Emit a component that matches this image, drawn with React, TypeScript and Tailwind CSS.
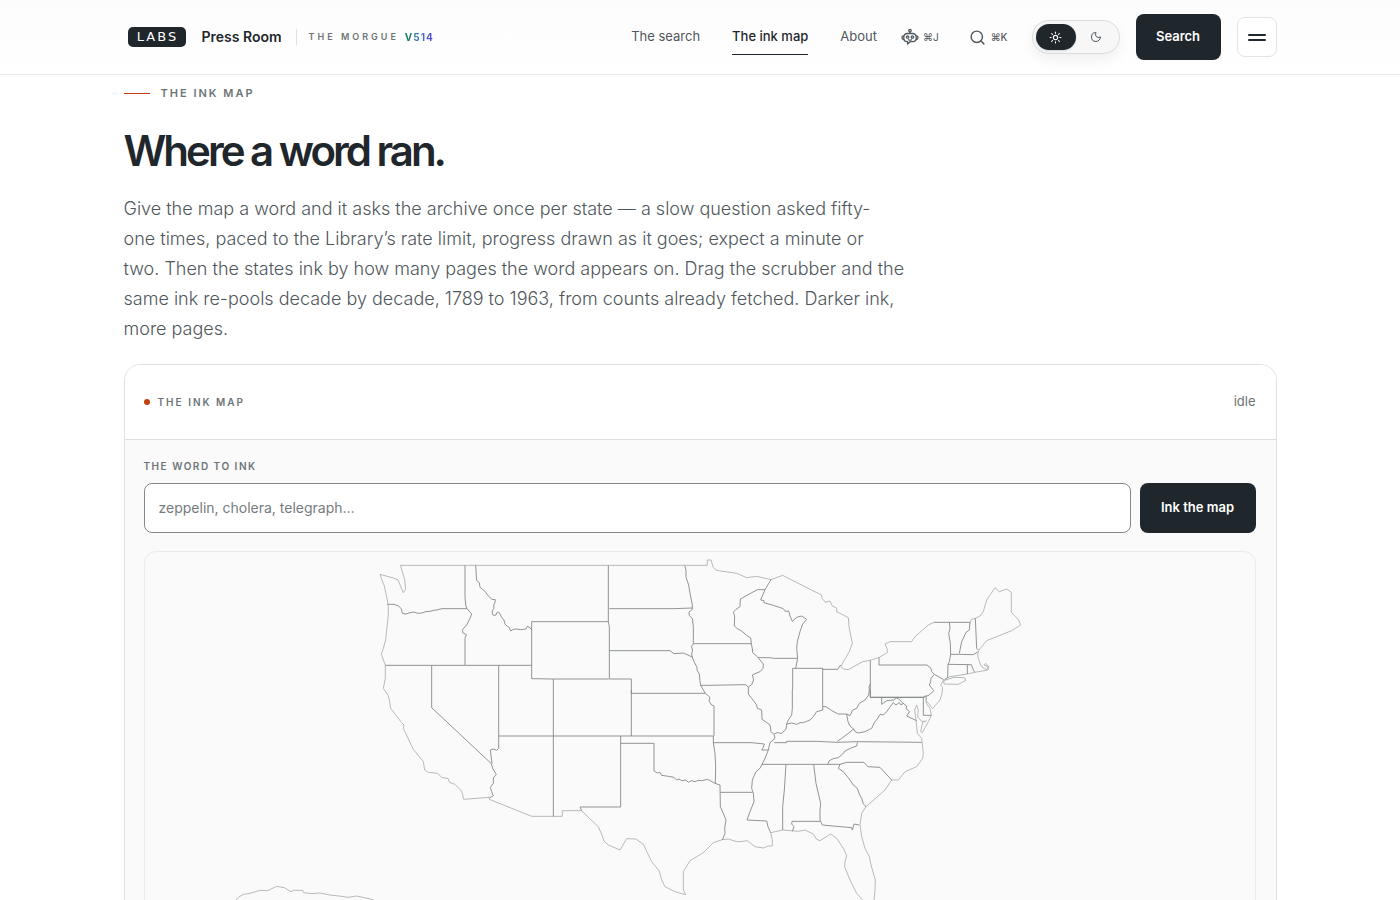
import { useState } from "react";
import { Moon, Search, Sun } from "lucide-react";
import clsx from "clsx";

type Region = { id: string; shift: string; coast: string; borders: string };

// Outlines are kept per region, each in its own local coordinates
const regions: Region[] = [
  {
    id: "northwest",
    shift: "translate(675 -6)",
    coast:
      "M716 46H91L97 65 104 90 107 118 100 128 84 90 70 84 30 73 34 85 43 108 50 140 55 170 55 195 50 240 47 270 40 295 34 313 42 335 46 346 46 385 40 415 55 437 58 450",
    borders:
      "M285 46V140L287 165 291 176 305 192 300 205 290 225 278 238 278 248 289 254 285 265V345 M52 163 72 163 85 168 94 176 97 190 108 192 120 188 132 186 143 190 155 189 168 185 180 184 190 181 200 180 216 176 291 176 M317 46 320 92 328 98 330 112 345 124 355 138 366 148 376 149 375 158 371 165 372 175 367 182 367 192 370 196 378 195 381 187 386 186 390 192 395 202 402 210 405 222 412 229 418 232 422 243 430 238 440 237 452 239 468 237 472 229 480 233 485 240 M46 346H485 M716 215H485V386L550 387H716 M185 346V420 M386 346V420 M550 387V420",
  },
  {
    id: "great-lakes",
    shift: "translate(1365 -6)",
    coast:
      "M26 46H322V30H333L340 53 350 61 410 70 440 83 470 79 513 89 548 76 575 90 664 135 667 146 676 157 690 153 697 168 710 174 710 185 745 203",
    borders:
      "M25 46V214L28 230V387 M254 46 258 60 258 82 266 105 270 130 277 165 277 178 267 186 268 197 277 205 280 230 280 281 M28 176H222L277 174 M28 302H210L222 311 250 309 270 318 278 322 M280 281 274 290 278 300 275 312 277 322 282 335 290 350 292 362 298 372 300 395 302 406 316 430 M280 281H454 M495 119H472L421 147 420 170 408 178 400 187 404 198 403 228 412 236 425 243 440 256 452 264 454 281 457 297 458 308 472 320 476 325 490 342 489 355 480 365 465 371 457 375 461 390 455 404 445 411 445 420 M302 406 320 406 437 404 445 411 M513 89 495 119 482 150 492 152 492 158 520 166 550 176 556 184 566 183 570 198 577 214 590 202 605 198 620 208 608 222 600 245 592 275 590 295 593 325 587 355 M474 323 510 323 520 325 593 325 M578 420V355H668V420 M668 358H713L722 345 M28 387H94V430H316",
  },
  {
    id: "northeast",
    shift: "translate(2055 54)",
    coast:
      "M55 143 57 170 67 220 58 245 40 275 33 290 40 297 55 299 98 275 120 271 148 262 172 248 172 238 165 222 180 215 245 215 255 200 295 165 312 157 M420 157 425 148 436 145 450 138 460 125 470 90 495 53 508 65 530 57 544 67V127L566 150 572 165 545 182 470 212 447 240 443 252 445 265 452 285 460 295 470 298 475 290 462 285 467 280 476 290 474 300 434 307 412 312 360 320 350 325 342 330 M342 342 385 343 408 331 403 323 372 322 350 329 341 333Z M341 330 332 345 338 352 336 370 330 390 308 416 300 405 288 392 290 380",
    borders:
      "M121 271V382H280 M147 262V285H291L303 295 305 305 313 313 303 325 302 335 298 345 311 362 298 375 285 380 280 382 M313 313 341 329 M312 157H420 M358 157 360 175 356 190 361 220 362 253 358 275 354 283 353 322 345 329 M420 157 418 180 408 187 395 215 388 250 M362 253H388L430 254 443 246 M354 283 424 284 428 295 434 307 M412 285V312 M436 145 440 235 445 240 M121 342 117 350 118 360",
  },
  {
    id: "southwest",
    shift: "translate(675 414)",
    coast:
      "M58 30 62 55 95 98 102 105 100 115 130 178 160 215 164 240 175 247 203 250 215 262 235 266 238 277 255 283 272 300 277 310 281 328 358 322V328L485 379H577V362H635L655 382 685 410 697 438 702 453",
    borders:
      "M185 0V53L364 221 368 235 379 254 370 263 370 280 361 292 365 305 370 317 358 324 M386 0V175L380 181 370 177 361 180 366 221 M386 138H690 M550 0V379 M690 351H630L635 362",
  },
  {
    id: "south-central",
    shift: "translate(1365 414)",
    coast:
      "M12 453 25 465 60 480 80 446 108 447 130 463 155 515 178 543 185 570 195 590 225 605 257 614 250 600 250 545 270 512 310 488 340 458 367 449 385 447 410 455 420 455",
    borders:
      "M316 10 330 22 327 33 335 45 342 48V138 M0 138H340 M94 0V138 M62 138V351H0 M62 160H162V243L172 249 180 247 185 256 205 259 222 262 230 270 237 267 245 272 258 270 265 277 274 272 285 275 295 271 305 272 323 268 345 280 360 285 361 350 370 370 378 390 374 415 375 430 367 450 M340 138V158L345 190 347 230 346 280 M340 158H420 M361 307H420",
  },
  {
    id: "southeast",
    shift: "translate(1785 414)",
    coast:
      "M558 17 558 38 570 55 574 76 565 95 547 128 542 125 548 97 560 92 M556 94 545 94 533 80 535 60 530 45 524 60 528 90 532 130 545 145 550 190 548 205 530 230 495 245 475 270 455 270 435 300 378 350 365 370 360 405 365 440 375 475 388 500 393 525 406 570 405 600 402 630 394 652 380 650 368 630 350 610 330 570 314 530 315 515 320 497 310 475 290 445 272 432 240 452 230 448 220 432 195 420 175 424 128 420 92 428 97 450 97 468 85 468 70 474 45 470 22 452 0 455",
    borders:
      "M391 0V22H550L558 17 M425 22V43L440 32 460 30 470 24 478 28 487 38 500 48 498 56 509 65 500 78 530 92 M341 117 345 125 355 129 375 125 395 115 403 98 414 84 420 73 430 75 440 65 447 55 460 38 468 45 478 38 483 45 490 40 M550 22V76H574 M248 50 258 50 275 62 295 72 320 72 330 77 338 60 350 55 358 40 375 30 386 15 388 0 M320 72 324 95 330 108 341 117 325 130 305 145 292 154 M103 158H140V154H230L292 157 350 155 545 157 M352 157 350 168 333 174 315 183 308 192 295 203 280 206 268 212 263 223 M66 223H300 M300 223 320 217 372 217 383 230 420 232 455 270 M300 223 295 235 310 245 324 262 340 285 352 295 358 312 365 325 370 342 378 350 M248 50 248 60 230 65 220 80 210 90 200 94 190 98 180 98 170 103 155 99 140 102 138 118 125 130 112 128 103 132 M157 0V55L155 75 145 90 140 102 M25 0V12L35 25 50 45 52 55 65 60 66 88 78 96 90 105 93 125 103 135 105 145 90 158 85 180 75 205 66 223 60 235 48 245 37 270 35 295 40 310 42 335 30 365 21 390 80 393 84 410 92 428 M0 158H35L73 162 70 172 65 180H85 M0 307H38 M248 0V50 M138 223 133 300 128 350V420 M221 223 228 280 242 340 240 360 240 390 247 405 335 413 337 420 342 402 358 405 M240 394H156L155 402 162 410 157 424",
  },
  {
    id: "alaska",
    shift: "translate(-75 924)",
    coast:
      "M330 146 348 120 355 112 370 103 390 100 420 91 443 92 470 79 493 83 513 95 520 91 548 91 551 98 575 101 600 99 630 105 665 109 685 112 710 108 760 119V200",
    borders: "",
  },
];

function RobotIcon() {
  return (
    <svg viewBox="0 0 18 18" className="size-[18px]" fill="none" stroke="currentColor" strokeWidth="1.3" strokeLinecap="round" strokeLinejoin="round">
      <circle cx="9" cy="2.6" r="1.2" />
      <path d="M9 3.8v1.7M6.2 5.5h5.6a3.4 3.4 0 0 1 3.4 3.4v1.4a3.4 3.4 0 0 1-3.4 3.4H9.2L6.6 16v-2.3h-.4a3.4 3.4 0 0 1-3.4-3.4V8.9a3.4 3.4 0 0 1 3.4-3.4Z" />
      <path d="M2.8 7.8C1.2 7.8 1 8.6 1 9.7s.4 1.8 1.8 1.8M15.2 7.8c1.6 0 1.8.8 1.8 1.9s-.4 1.8-1.8 1.8M7.400 11.700q1.600.9 3.200 0" />
      <circle cx="6.6" cy="9" r="1.2" />
      <circle cx="11.4" cy="9" r="1.2" />
    </svg>
  );
}

function InkMap() {
  return (
    <svg viewBox="0 0 3330 1560" className="block w-full" fill="none" role="img" aria-label="Map of the states">
      {regions.map((r) => (
        <g key={r.id} transform={r.shift} strokeLinejoin="round">
          <path d={r.coast} stroke="#acafb1" strokeWidth="2.6" />
          <path d={r.borders} stroke="#7f8487" strokeWidth="2.6" />
        </g>
      ))}
    </svg>
  );
}

const links = ["The search", "The ink map", "About"];

export default function App() {
  const [dark, setDark] = useState(false);
  const [word, setWord] = useState("");

  return (
    <div className="min-h-screen bg-white font-['Inter',sans-serif] text-[#1f262c]">
      <header className="sticky top-0 z-10 border-b border-[#ebebec] bg-linear-to-b from-[#fcfcfc] to-white">
        <div className="mx-auto flex h-[74px] max-w-[1153px] items-center">
          <a href="#" className="ml-1 flex h-5 w-[58px] items-center justify-center rounded-[5px] bg-[#1f262c] pl-0.5 font-['DejaVu_Sans',sans-serif] text-[13px] tracking-[2px] text-white">
            LABS
          </a>
          <span className="ml-4 text-sm font-semibold">Press Room</span>
          <span className="ml-3.5 h-4 border-l border-[#dfe0e1]" />
          <span className="ml-3 text-[9px] font-semibold tracking-[3px] text-[#6d7478]">THE MORGUE</span>
          <span className="ml-1.5 bg-linear-to-r from-[#16794c] via-[#3a79b5] to-[#5b3fd6] bg-clip-text text-[10px] font-bold tracking-[1px] text-transparent">V514</span>

          <nav className="ml-auto flex items-center gap-8 text-[13px]">
            {links.map((l) => (
              <a
                key={l}
                href="#"
                className={clsx(
                  "border-b pt-2 pb-[7px]",
                  l === "The ink map" ? "border-[#1f262c] font-medium text-[#1f262c]" : "border-transparent text-[#50575c]"
                )}
              >
                {l}
              </a>
            ))}
          </nav>
          <button className="ml-6 flex items-center gap-1 text-[10px] text-[#50575c]" aria-label="Assistant">
            <RobotIcon />
            <span>⌘J</span>
          </button>
          <button className="ml-[30px] flex items-center gap-[5px] text-[10px] font-medium text-[#50575c]" aria-label="Find">
            <Search size={17} strokeWidth={2} />
            <span>⌘K</span>
          </button>

          <button
            onClick={() => setDark(!dark)}
            aria-label="Toggle theme"
            className="ml-6 flex h-[34px] w-[88px] items-center rounded-full border border-[#dadcdd] bg-[#f7f7f8] px-[3px] shadow-[0_6px_14px_rgba(0,0,0,0.06)]"
          >
            <span className="flex h-[26px] w-10 items-center justify-center rounded-full bg-[#1f262c] text-white shadow-sm">
              <Sun size={13} strokeWidth={2} />
            </span>
            <span className="flex h-[26px] w-10 items-center justify-center text-[#50575c]">
              <Moon size={12} strokeWidth={2} />
            </span>
          </button>
          <button className="ml-4 h-[46px] w-[85px] rounded-lg bg-[#1f262c] text-[13px] font-semibold text-white">Search</button>
          <button className="ml-4 flex size-10 flex-col items-center justify-center gap-[3px] rounded-lg border border-[#e3e4e5] bg-white" aria-label="Menu">
            <span className="h-0.5 w-[18px] rounded-full bg-[#1f262c]" />
            <span className="h-0.5 w-[18px] rounded-full bg-[#1f262c]" />
          </button>
        </div>
      </header>

      <main className="mx-auto max-w-[1153px] pt-2.5">
        <p className="flex items-center gap-[11px] text-[11px] leading-4 font-semibold tracking-[2px] text-[#6d7478]">
          <span className="w-[26px] border-t border-[#c2410c]" />
          THE INK MAP
        </p>
        <h1 className="mt-6 text-[42px] leading-[52px] font-semibold tracking-[-3px]">Where a word ran.</h1>
        <p className="mt-[17px] max-w-[830px] text-lg leading-[30px] font-light text-[#50575c]">
          Give the map a word and it asks the archive once per state — a slow question asked fifty-
          <br className="hidden lg:inline" />
          one times, paced to the Library’s rate limit, progress drawn as it goes; expect a minute or{" "}
          <br className="hidden lg:inline" />
          two. Then the states ink by how many pages the word appears on. Drag the scrubber and the{" "}
          <br className="hidden lg:inline" />
          same ink re-pools decade by decade, 1789 to 1963, from counts already fetched. Darker ink,{" "}
          <br className="hidden lg:inline" />
          more pages.
        </p>

        <section className="mt-5 overflow-hidden rounded-2xl border border-[#dfe0e1] bg-[#fafafa]">
          <div className="flex h-[75px] items-center border-b border-[#dfe0e1] bg-white pr-5 pl-[19px]">
            <span className="size-1.5 rounded-full bg-[#c2410c]" />
            <h2 className="ml-2 text-[10px] font-semibold tracking-[2px] text-[#6d7478]">THE INK MAP</h2>
            <span className="ml-auto text-[13px] text-[#6d7478]">idle</span>
          </div>
          <div className="pt-[18px] pr-5 pb-5 pl-[19px]">
            <label htmlFor="word" className="block text-[10px] leading-4 font-semibold tracking-[1.5px] text-[#6d7478]">
              THE WORD TO INK
            </label>
            <div className="mt-[9px] flex gap-[9px]">
              <input
                id="word"
                value={word}
                onChange={(e) => setWord(e.target.value)}
                placeholder="zeppelin, cholera, telegraph…"
                className="h-[50px] min-w-0 flex-1 rounded-lg border border-[#85898c] bg-white px-3.5 pb-0.5 text-sm placeholder:text-[#757b7f]"
              />
              <button className="w-[116px] rounded-lg bg-[#1f262c] text-[13px] font-semibold text-white">Ink the map</button>
            </div>
            <div className="mt-[18px] overflow-hidden rounded-xl border border-[#ebebec]">
              <InkMap />
            </div>
          </div>
        </section>
      </main>
    </div>
  );
}
